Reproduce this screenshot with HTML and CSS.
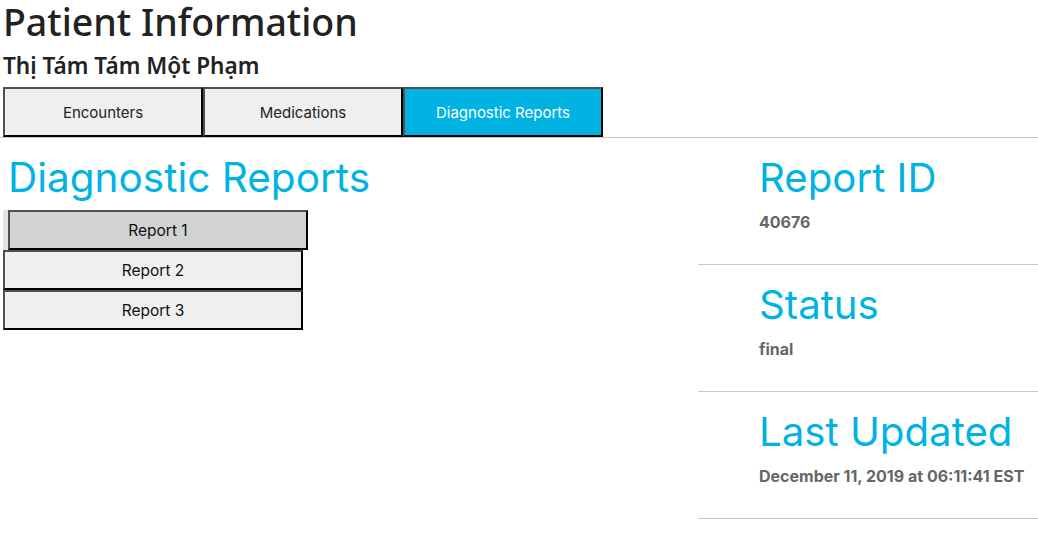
FILE: index.html
```html
<!DOCTYPE html>
<html lang="vi">
<head>
<meta charset="utf-8">
<title>Patient Information</title>
<link rel="stylesheet" href="styles.css">
</head>
<body>
<header class="patient">
  <h1 class="page-title">Patient Information</h1>
  <h2 class="patient-name">Thị Tám Tám Một Phạm</h2>
</header>
<nav class="tabs">
  <button class="tab">Encounters</button>
  <button class="tab">Medications</button>
  <button class="tab tab-active">Diagnostic Reports</button>
</nav>
<main class="content">
  <section class="reports">
    <h2 class="section-title">Diagnostic Reports</h2>
    <div class="report-list">
      <button class="report report-active">Report 1</button>
      <button class="report">Report 2</button>
      <button class="report">Report 3</button>
    </div>
  </section>
  <aside class="details">
    <div class="detail">
      <h2 class="detail-title">Report ID</h2>
      <p class="detail-value">40676</p>
    </div>
    <div class="detail">
      <h2 class="detail-title">Status</h2>
      <p class="detail-value">final</p>
    </div>
    <div class="detail">
      <h2 class="detail-title">Last Updated</h2>
      <p class="detail-value">December 11, 2019 at 06:11:41 EST</p>
    </div>
  </aside>
</main>
</body>
</html>
```

FILE: styles.css
```css
html, body {
  margin: 0;
  padding: 0;
  background: #fff;
}
body {
  font-family: Inter, "Noto Sans", sans-serif;
  color: #222;
}
.patient {
  padding-left: 3px;
}
.page-title {
  font-family: "Noto Sans", "Open Sans", sans-serif;
  font-weight: 500;
  font-size: 37.5px;
  line-height: 44px;
  margin: 0;
  color: #222;
}
.patient-name {
  font-family: "Noto Sans", "Open Sans", sans-serif;
  font-weight: 600;
  font-size: 22.6px;
  line-height: 30px;
  margin: 7px 0 6px 0;
  color: #222;
}
.tabs {
  display: flex;
  padding-left: 3px;
  border-bottom: 1px solid #c8c8c8;
}
.tab {
  width: 200px;
  height: 50px;
  font-family: Inter, sans-serif;
  font-size: 15px;
  color: #222;
  background: #efefef;
  border: 2px solid;
  border-color: #505050 #000 #000 #505050;
  margin: 0;
  padding: 0;
}
.tab-active {
  background: #00b3e3;
  color: #fff;
}
.content {
  display: flex;
}
.reports {
  flex: 0 0 698px;
  padding-left: 3px;
  box-sizing: border-box;
}
.section-title, .detail-title {
  font-family: Inter, sans-serif;
  font-weight: 400;
  font-size: 40.5px;
  line-height: 48px;
  color: #00b3e3;
  margin: 0;
}
.detail-title {
  font-size: 40.2px;
}
.section-title {
  padding: 16px 0 0 5px;
}
.report-list {
  display: flex;
  flex-direction: column;
  align-items: flex-start;
  margin-top: 8px;
}
.report {
  width: 300px;
  height: 40px;
  font-family: Inter, sans-serif;
  font-size: 15.5px;
  color: #111;
  background: #efefef;
  border: 2px solid;
  border-color: #505050 #000 #000 #505050;
  margin: 0;
  padding: 0;
}
.report-active {
  margin-left: 5px;
  background: #d1d2d4;
  box-shadow: -5px 0 0 #e2e2e2;
}
.details {
  flex: 1;
}
.detail {
  box-sizing: border-box;
  padding: 16px 0 0 61px;
  height: 127px;
  border-bottom: 1px solid #c8c8c8;
}
.detail-value {
  font-family: Inter, sans-serif;
  font-weight: 700;
  font-size: 16px;
  color: #666;
  margin: 10px 0 0 0;
}
```
